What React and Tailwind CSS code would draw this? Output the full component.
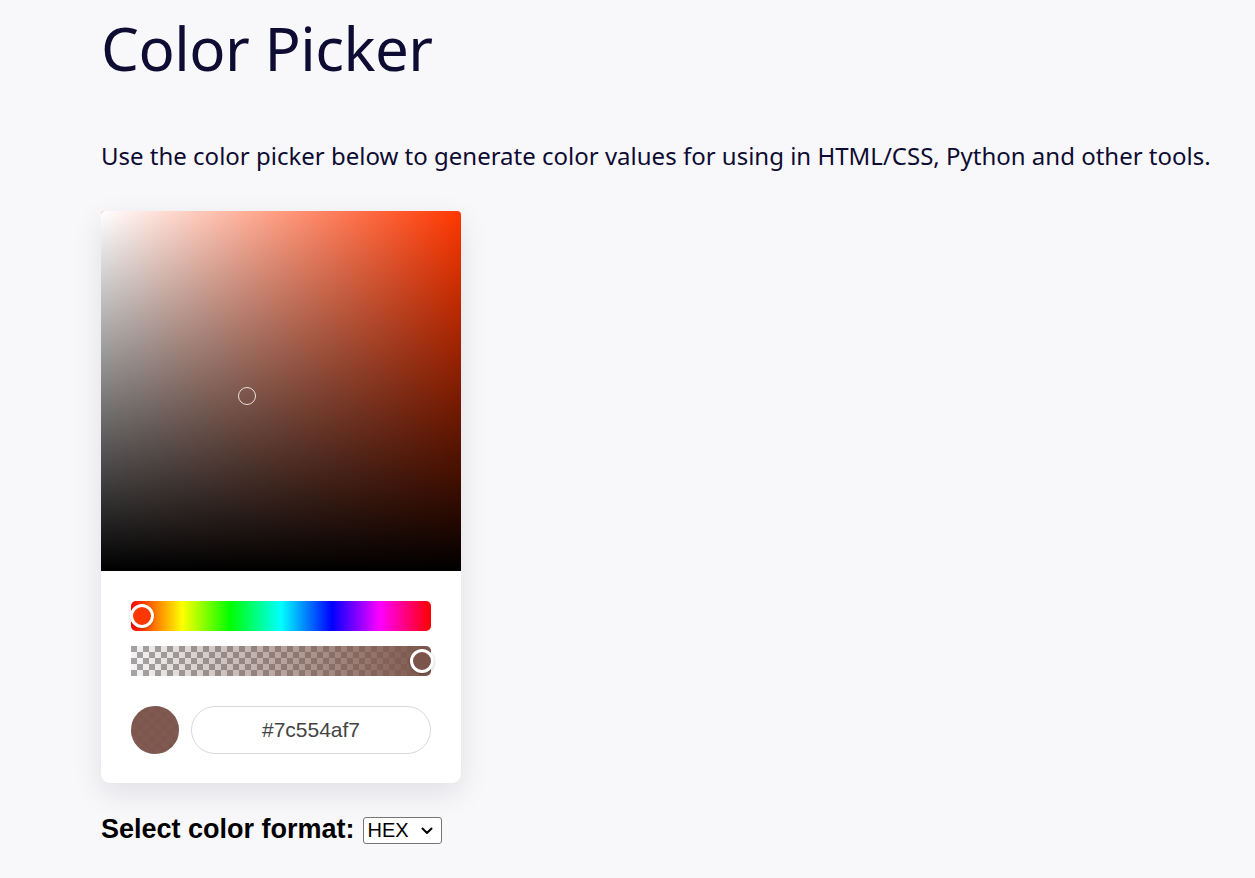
const HUE = "#ff3700";
const COLOR = "#7c554a";

function Thumb({ color }) {
  return (
    <span
      className="absolute top-1/2 -translate-x-1/2 -translate-y-1/2 w-[24px] h-[24px] rounded-full border-[3px] border-white shadow-[0_1px_3px_rgba(0,0,0,0.25)]"
      style={{ backgroundColor: color }}
    />
  );
}

export default function App() {
  return (
    <div className="min-h-screen bg-[#f8f8fa] text-[#0e0c33] font-['Noto_Sans',sans-serif] pl-[101px] pt-[10px] pb-10">
      <h1 className="text-[60px] leading-[76px] font-normal tracking-[-0.5px]">Color Picker</h1>

      <p className="mt-[55px] text-[24px] leading-[30px]">
        Use the color picker below to generate color values for using in HTML/CSS, Python and other tools.
      </p>

      {/* PICKER */}
      <div className="mt-[40px] w-[360px] bg-white rounded-t-[4px] rounded-b-[9px] shadow-[0_10px_30px_rgba(20,20,50,0.10)]">
        {/* saturation */}
        <div className="relative h-[360px] rounded-t-[4px] overflow-hidden" style={{ backgroundColor: HUE }}>
          <div className="h-full bg-[linear-gradient(to_right,#fff,rgba(255,255,255,0))]">
            <div className="h-full bg-[linear-gradient(to_top,#000,rgba(0,0,0,0))]" />
          </div>
          <span className="absolute left-[146px] top-[185px] -translate-x-1/2 -translate-y-1/2 w-[18px] h-[18px] rounded-full border border-[#e8e0dc]" />
        </div>

        <div className="px-[30px] pt-[30px] pb-[29px]">
          {/* hue */}
          <div className="relative h-[30px] rounded-[5px] bg-[linear-gradient(to_right,#f00_0%,#ff0_17%,#0f0_33%,#0ff_50%,#00f_67%,#f0f_83%,#f00_100%)]">
            <span className="absolute left-[11px] top-1/2">
              <Thumb color={HUE} />
            </span>
          </div>

          {/* alpha */}
          <div className="relative mt-[15px] h-[30px] rounded-r-[5px] bg-[conic-gradient(#f4f4f4_25%,#a3a3a3_0_50%,#f4f4f4_0_75%,#a3a3a3_0)] bg-[length:12px_12px]">
            <div className="h-full rounded-r-[5px] bg-[linear-gradient(to_right,rgba(124,85,74,0),#7c554a)]" />
            <span className="absolute left-[291px] top-1/2">
              <Thumb color={COLOR} />
            </span>
          </div>

          {/* value */}
          <div className="mt-[30px] flex items-center gap-[12px]">
            <div className="w-[48px] h-[48px] rounded-full bg-[conic-gradient(#f4f4f4_25%,#a3a3a3_0_50%,#f4f4f4_0_75%,#a3a3a3_0)] bg-[length:12px_12px] overflow-hidden">
              <div className="w-full h-full bg-[#7c554a]/[0.97]" />
            </div>
            <div className="flex-1 h-[48px] rounded-full border border-[#d9d9d9] flex items-center justify-center font-['Liberation_Sans',Arial,sans-serif] text-[21px] text-[#444]">
              #7c554af7
            </div>
          </div>
        </div>
      </div>

      <div className="mt-[30px] flex items-center gap-[8px] font-['Liberation_Sans',Arial,sans-serif] text-black">
        <label className="text-[27px] font-bold leading-[32px]">Select color format:</label>
        <div className="relative mt-[3px]">
          <select
            defaultValue="HEX"
            className="appearance-none h-[27px] w-[79px] border border-[#767676] rounded-[3px] bg-white text-[20px] leading-[25px] pl-[4px] text-black outline-none"
          >
            <option>HEX</option>
            <option>RGB</option>
            <option>HSL</option>
          </select>
          <svg
            className="absolute right-[9px] top-1/2 -translate-y-1/2 pointer-events-none"
            width="12"
            height="8"
            viewBox="0 0 12 8"
            fill="none"
          >
            <path d="M1.5 1.5 6 6l4.5-4.5" stroke="#000" strokeWidth="2" strokeLinecap="round" strokeLinejoin="round" />
          </svg>
        </div>
      </div>
    </div>
  );
}
